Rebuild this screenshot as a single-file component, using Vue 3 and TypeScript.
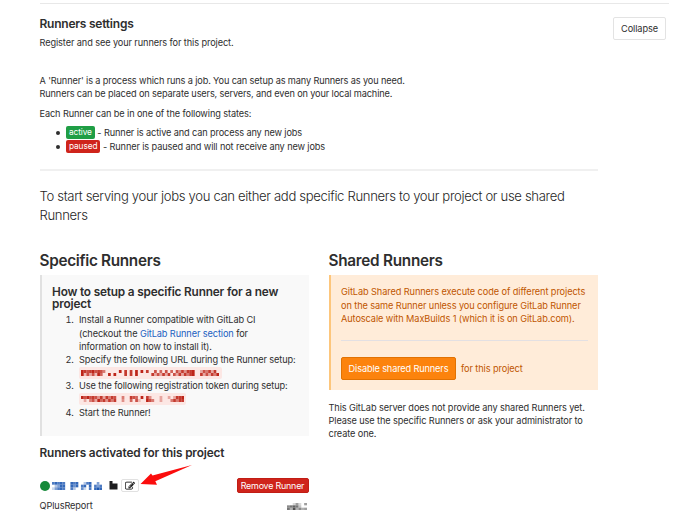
<script setup lang="ts">
interface Cell {
  x: number
  y: number
  o: number
}

// Each digit is the strength of one mosaic tile, from 0 (clear) to 9 (solid).
function tiles(rows: string[]): Cell[] {
  return rows.flatMap((row, y) =>
    [...row].map((c, x) => ({ x, y, o: Number(c) / 9 })).filter((t) => t.o > 0),
  )
}

const urlMask = tiles([
  '987897875000009080809090800706070607484889003758380',
  '927372960090900080809000008373838073838589008373859',
])
const tokenMask = tiles([
  '97978748385870050087609084000300303889',
  '03057396848580040060720097500300058588',
])
const nameMask = tiles([
  '7878700878003780050',
  '0358800868078080757',
  '2578700730062070898',
])
const tagMask = tiles(['0025205', '6787300', '7494645'])
</script>

<template>
  <main class="page">
    <section class="settings">
      <header class="head">
        <div>
          <h4 class="title">Runners settings</h4>
          <p class="sub">Register and see your runners for this project.</p>
        </div>
        <button class="collapse" type="button">Collapse</button>
      </header>

      <div class="content">
        <p class="intro">
          A 'Runner' is a process which runs a job. You can setup as many Runners as you need.<br />Runners can be
          placed on separate users, servers, and even on your local machine.
        </p>
        <p class="states">Each Runner can be in one of the following states:</p>
        <ul class="state-list">
          <li><span class="badge green">active</span> - Runner is active and can process any new jobs</li>
          <li><span class="badge red">paused</span> - Runner is paused and will not receive any new jobs</li>
        </ul>
        <hr class="rule" />
        <p class="lead">
          To start serving your jobs you can either add specific Runners to your project or use shared<br />Runners
        </p>

        <div class="columns">
          <div>
            <h4 class="col-title">Specific Runners</h4>
            <div class="callout info">
              <h5 class="how">How to setup a specific Runner for a new<br />project</h5>
              <ol class="steps">
                <li>
                  Install a Runner compatible with GitLab CI<br />(checkout the
                  <a>GitLab Runner section</a> for<br />information on how to install it).
                </li>
                <li>
                  Specify the following URL during the Runner setup:
                  <span class="code url">
                    <svg viewBox="0 0 51 2" preserveAspectRatio="none">
                      <rect v-for="(t, i) in urlMask" :key="i" :x="t.x" :y="t.y" width="1" height="1" :opacity="t.o" fill="#bd2418" />
                    </svg>
                  </span>
                </li>
                <li>
                  Use the following registration token during setup:
                  <span class="code token">
                    <svg viewBox="0 0 38 2" preserveAspectRatio="none">
                      <rect v-for="(t, i) in tokenMask" :key="i" :x="t.x" :y="t.y" width="1" height="1" :opacity="t.o" fill="#bd2418" />
                    </svg>
                  </span>
                </li>
                <li>Start the Runner!</li>
              </ol>
            </div>

            <h4 class="activated">Runners activated for this project</h4>
            <div class="runner">
              <span class="dot"></span>
              <svg class="name" viewBox="0 0 19 3" preserveAspectRatio="none">
                <rect v-for="(t, i) in nameMask" :key="i" :x="t.x" :y="t.y" width="1" height="1" :opacity="t.o" fill="#1b55b0" />
              </svg>
              <svg class="lock" viewBox="0 0 9 9"><path d="M.5 0h3v2.500h5v6h-8z" fill="#1d1d1f" /></svg>
              <button class="edit" type="button" aria-label="Edit">
                <svg viewBox="0 0 1792 1792">
                  <path
                    fill="#1e1e1e"
                    stroke="#1e1e1e"
                    stroke-width="20"
                    d="M888 1184l116-116-152-152-116 116v56h96v96h56zm440-720q-16-16-33 1l-350 350q-17 17-1 33t33-1l350-350q17-17 1-33zm80 594v190q0 119-84.500 203.500t-203.500 84.500h-832q-119 0-203.500-84.500t-84.500-203.500v-832q0-119 84.500-203.500t203.500-84.500h832q63 0 117 25 15 7 18 23 3 17-9 29l-49 49q-14 14-32 8-23-6-45-6h-832q-66 0-113 47t-47 113v832q0 66 47 113t113 47h832q66 0 113-47t47-113v-126q0-13 9-22l64-64q15-15 35-7t20 29zm-96-738l288 288-672 672h-288v-288zm444 132l-92 92-288-288 92-92q28-28 68-28t68 28l152 152q28 28 28 68t-28 68z"
                  />
                </svg>
              </button>
              <svg class="arrow" viewBox="0 0 54 24"><path d="M52 1L12.500 11.500 11 9.500.5 20l16.500.8-1.700-3.600z" fill="#fb0d0d" /></svg>
              <button class="remove" type="button">Remove Runner</button>
            </div>
            <div class="meta">
              <span>QPlusReport</span>
              <svg viewBox="0 0 7 3" preserveAspectRatio="none">
                <rect v-for="(t, i) in tagMask" :key="i" :x="t.x" :y="t.y" width="1" height="1" :opacity="t.o" fill="#505050" />
              </svg>
            </div>
          </div>

          <div>
            <h4 class="col-title shared">Shared Runners</h4>
            <div class="callout warning">
              <p>
                GitLab Shared Runners execute code of different projects<br />on the same Runner unless you configure
                GitLab Runner<br />Autoscale with MaxBuilds 1 (which it is on GitLab.com).
              </p>
              <hr />
              <div class="action">
                <button class="disable" type="button">Disable shared Runners</button>
                <span>for this project</span>
              </div>
            </div>
            <p class="none">
              This GitLab server does not provide any shared Runners yet.<br />Please use the specific Runners or ask
              your administrator to<br />create one.
            </p>
          </div>
        </div>
      </div>
    </section>
  </main>
</template>

<style>
body {
  background: #fff;
}
</style>

<style scoped>
* {
  box-sizing: border-box;
}
.page {
  height: 514px;
  overflow: hidden;
  padding: 3px 31px 0 39.5px;
  color: #2e2e2e;
  font: 9.2px/13.15px Inter, "Liberation Sans", sans-serif;
  letter-spacing: -0.1px;
  white-space: nowrap;
}
h4,
h5,
p,
ul,
ol {
  margin: 0;
}
button {
  font: inherit;
  letter-spacing: inherit;
  padding: 0;
  border-radius: 2px;
}
.settings {
  border-top: 1px solid #e8e8e8;
}
.head {
  display: flex;
  justify-content: space-between;
  height: 70px;
  padding: 12px 3px 0 0;
}
.title {
  font-size: 12px;
  line-height: 16px;
  font-weight: 600;
  letter-spacing: -0.23px;
}
.sub {
  margin-top: 4px;
}
.collapse {
  width: 53px;
  height: 23px;
  margin-top: 1px;
  border: 1px solid #e3e3e3;
  background: #fff;
  color: #2e2e2e;
}
.content {
  width: 558px;
}
.intro {
  letter-spacing: -0.135px;
}
.states {
  margin-top: 7px;
  letter-spacing: -0.11px;
}
.state-list {
  margin-top: 5.5px;
  padding-left: 16.500px;
  list-style: none;
}
.state-list li {
  display: flex;
  align-items: center;
  height: 14px;
  line-height: 14px;
  letter-spacing: -0.12px;
  white-space: pre;
}
.state-list li::before {
  content: "";
  width: 4px;
  height: 4px;
  margin-right: 6px;
  border-radius: 50%;
  background: #2e2e2e;
}
.badge {
  display: inline-block;
  height: 13px;
  padding: 0 3px;
  border-radius: 2px;
  color: #fff;
  font-size: 8.3px;
  line-height: 13px;
  letter-spacing: -0.1px;
}
.green {
  background: #1f9e45;
}
.red {
  background: #cf241b;
}
.rule {
  height: 2px;
  margin: 15.5px 0 16px;
  border: 0;
  background: #f0f0f0;
}
.lead {
  font-size: 13.1px;
  line-height: 19px;
  font-weight: 300;
  letter-spacing: -0.335px;
  color: #1f1f1f;
}
.columns {
  display: grid;
  grid-template-columns: 269px 269px;
  column-gap: 20px;
  margin-top: 27px;
}
.col-title {
  height: 23px;
  font-size: 15.3px;
  line-height: 17px;
  font-weight: 600;
  letter-spacing: -0.3px;
}
.shared {
  letter-spacing: -0.26px;
}
.callout {
  padding: 11px 10px 0 10.5px;
  border-left: 2px solid #e1e1e1;
}
.info {
  height: 161px;
  background: #f9f9f9;
}
.how {
  font-size: 11.8px;
  line-height: 12px;
  font-weight: 600;
  letter-spacing: -0.17px;
}
.steps {
  margin-top: 3px;
  padding-left: 24px;
}
.steps li {
  padding-left: 3px;
}
a {
  color: #1b5fc1;
}
.code {
  display: flex;
  align-items: center;
  height: 12px;
  margin: 0.8px 0 0.35px;
  padding-left: 2px;
  border-radius: 2px;
  background: #fce7e4;
}
.url {
  width: 143px;
}
.token {
  width: 107px;
}
.code svg {
  width: 138px;
  height: 6px;
}
.token svg {
  width: 103px;
}
.activated {
  margin-top: 9px;
  font-size: 11.8px;
  line-height: 16px;
  font-weight: 600;
  letter-spacing: -0.14px;
}
.runner {
  position: relative;
  display: flex;
  align-items: center;
  height: 15px;
  margin-top: 17px;
}
.dot {
  width: 10px;
  height: 10px;
  border-radius: 50%;
  background: #168a3a;
}
.name {
  width: 50px;
  height: 8px;
  margin-left: 2.5px;
}
.lock {
  width: 9px;
  height: 9px;
  margin-left: 7px;
}
.edit {
  display: grid;
  place-items: center;
  width: 18px;
  height: 13px;
  margin-left: 3px;
  border: 1px solid #e1e1e1;
  background: #fff;
}
.edit svg {
  width: 10px;
  height: 10px;
}
.arrow {
  position: absolute;
  left: 100.5px;
  top: -14.500px;
  width: 54px;
  height: 24px;
}
.remove {
  width: 72px;
  height: 15px;
  margin-left: auto;
  border: 1px solid #c11d15;
  background: #cf241b;
  color: #fff;
  font-size: 8.9px;
  line-height: 13px;
  letter-spacing: -0.2px;
}
.meta {
  display: flex;
  justify-content: space-between;
  align-items: center;
  margin-top: 6px;
}
.meta svg {
  width: 20px;
  height: 7px;
  margin-right: 2px;
}
.warning {
  height: 115px;
  padding-top: 10px;
  border-color: #fdc67c;
  background: #ffecd9;
  color: #c05600;
  letter-spacing: -0.09px;
}
.warning hr {
  height: 1px;
  margin: 15px 0 16px;
  border: 0;
  background: #e3e0e3;
}
.action {
  display: flex;
  align-items: center;
  gap: 5px;
}
.disable {
  width: 115px;
  height: 23px;
  border: 1px solid #e17203;
  background: #fc830d;
  color: #fff;
  letter-spacing: -0.14px;
}
.none {
  margin-top: 10.5px;
  letter-spacing: -0.105px;
}
</style>
